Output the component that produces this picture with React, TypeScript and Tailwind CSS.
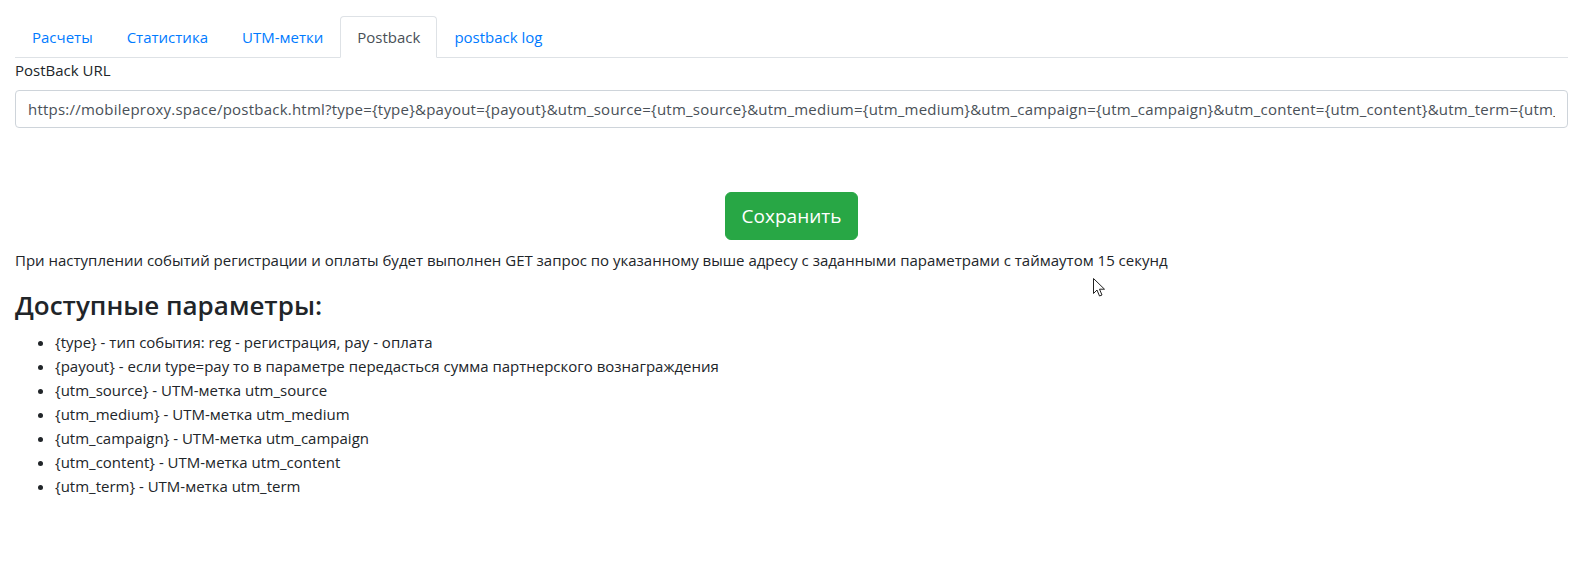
import React from "react";

const tabs = ["Расчеты", "Статистика", "UTM-метки", "Postback", "postback log"];

const params: [string, string][] = [
  ["{type}", "тип события: reg - регистрация, pay - оплата"],
  ["{payout}", "если type=pay то в параметре передасться сумма партнерского вознаграждения"],
  ["{utm_source}", "UTM-метка utm_source"],
  ["{utm_medium}", "UTM-метка utm_medium"],
  ["{utm_campaign}", "UTM-метка utm_campaign"],
  ["{utm_content}", "UTM-метка utm_content"],
  ["{utm_term}", "UTM-метка utm_term"],
];

const postbackUrl =
  "https://mobileproxy.space/postback.html?type={type}&payout={payout}&utm_source={utm_source}&utm_medium={utm_medium}&utm_campaign={utm_campaign}&utm_content={utm_content}&utm_term={utm_term}";

export default function App() {
  return (
    <div className="relative min-h-[570px] bg-white pl-[15px] pr-[9px] pt-4 text-[15px] leading-6 text-[#212529] [font-family:'Open_Sans','Noto_Sans',sans-serif]">
      {/* Вкладки */}
      <ul className="flex border-b border-[#dee2e6]">
        {tabs.map((tab) => (
          <li key={tab} className="-mb-px">
            <a
              href="#"
              className={
                tab === "Postback"
                  ? "block rounded-t border border-[#dee2e6] border-b-white bg-white px-4 py-2 text-[#495057]"
                  : "block rounded-t border border-transparent px-4 py-2 text-[#007bff]"
              }
            >
              {tab}
            </a>
          </li>
        ))}
      </ul>

      {/* Форма */}
      <div className="pb-4">
        <label className="mb-2 block">PostBack URL</label>
        <input
          type="text"
          defaultValue={postbackUrl}
          className="block h-[38px] w-full rounded border border-[#ced4da] bg-white px-3 py-1.5 tracking-[0.23px] text-[#495057] outline-none"
        />
      </div>

      <div className="flex justify-center pt-12 pb-2">
        <button
          type="button"
          className="h-12 rounded-md border border-[#28a745] bg-[#28a745] px-4 text-[19px] leading-[30px] text-white"
        >
          Сохранить
        </button>
      </div>

      <p className="mb-4">
        При наступлении событий регистрации и оплаты будет выполнен GET запрос по указанному выше адресу с заданными параметрами с таймаутом 15 секунд
      </p>

      <h3 className="mb-2 text-[26px] font-semibold leading-[34px]">Доступные параметры:</h3>

      <ul className="list-disc pl-10">
        {params.map(([key, desc]) => (
          <li key={key}>
            {key} - {desc}
          </li>
        ))}
      </ul>

      {/* Курсор мыши */}
      <svg
        className="absolute left-[1093px] top-[278px]"
        width="13"
        height="20"
        viewBox="0 0 13 20"
      >
        <path
          d="M0.5 0.5 L0.5 15.5 L4 12 L6.5 18 L9 17 L6.5 11.2 L11.5 11.2 Z"
          fill="white"
          stroke="#222"
          strokeWidth="1"
          strokeLinejoin="round"
        />
      </svg>
    </div>
  );
}
